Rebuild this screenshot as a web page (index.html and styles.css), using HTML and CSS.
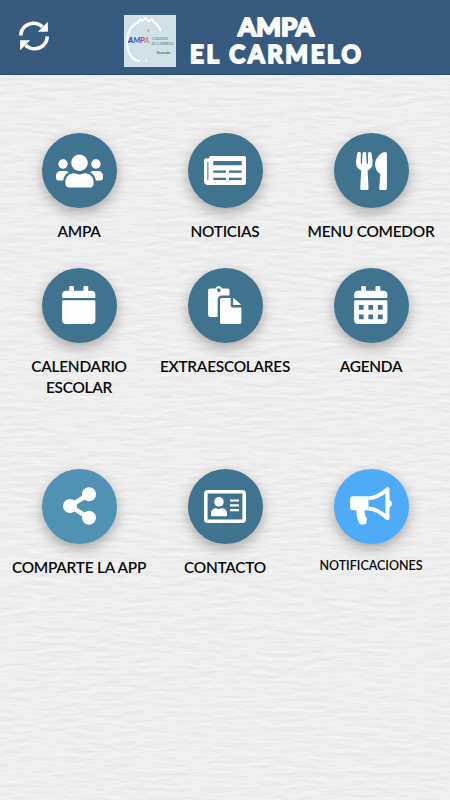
FILE: index.html
```html
<!DOCTYPE html>
<html lang="es">
<head>
  <meta charset="UTF-8">
  <meta name="viewport" content="width=device-width, initial-scale=1.0">
  <title>AMPA El Carmelo</title>
  <link rel="stylesheet" href="styles.css">
</head>
<body>
  <!-- Paper texture -->
  <svg class="paper" width="450" height="800">
    <filter id="grain" x="0" y="0" width="100%" height="100%" color-interpolation-filters="sRGB">
      <feTurbulence type="fractalNoise" baseFrequency="0.04 0.2" numOctaves="4" seed="8" result="noise"/>
      <feDiffuseLighting in="noise" surfaceScale="0.17" diffuseConstant="1.135" lighting-color="#eeeeee">
        <feDistantLight azimuth="270" elevation="62"/>
      </feDiffuseLighting>
    </filter>
    <rect width="450" height="800" filter="url(#grain)"/>
  </svg>

  <header class="topbar">
    <svg class="refresh" viewBox="0 0 30 30">
      <path d="M1.8 14.5C2 6.5 8.5 2.2 14.5 2.2c3.600 0 6.500 1.300 8.800 3.600" fill="none" stroke="#fff" stroke-width="3.600"/>
      <path d="M28.900.8v10h-10z" fill="#fff"/>
      <path d="M28.200 15.500c-.2 8-6.700 12.300-12.700 12.300-3.600 0-6.500-1.300-8.800-3.600" fill="none" stroke="#fff" stroke-width="3.600"/>
      <path d="M1.100 29.200v-10h10z" fill="#fff"/>
    </svg>

    <svg class="logo" viewBox="0 0 52 52">
      <rect width="52" height="52" fill="#d0e1e8"/>
      <path d="M15 46C6 44.500 2.500 34 3.200 24.500 4 15 9 9.500 14 7.500l2.200-3.200 2.600 1.500L21.500 3l2.700 3 4-1.800L30 7.500c3 1.500 5 4 6.200 7.500" fill="none" stroke="#fff" stroke-width="2" stroke-linecap="round" stroke-linejoin="round"/>
      <path d="M24.300 13.500l.6 1.300 1.400.2-1 1 .2 1.400-1.200-.7-1.200.7.200-1.400-1-1 1.400-.2z" fill="#c8b98c"/>
      <circle cx="22" cy="45.500" r="1" fill="#fff"/>
      <text class="logo-ampa" x="4" y="28" textLength="21.500" lengthAdjust="spacingAndGlyphs"><tspan fill="#4a2f9c">A</tspan><tspan fill="#3c62c8">M</tspan><tspan fill="#a53ccb">P</tspan><tspan fill="#d98d5a">A</tspan></text>
      <text class="logo-school" x="28" y="24.500" textLength="16" lengthAdjust="spacingAndGlyphs">COLEGIO</text>
      <text class="logo-school" x="27.500" y="30" textLength="22" lengthAdjust="spacingAndGlyphs">EL CARMELO</text>
      <text class="logo-city" x="32.500" y="38.500" textLength="13.500" lengthAdjust="spacingAndGlyphs">Granada</text>
    </svg>

    <h1>
      <svg class="title" viewBox="0 0 178 60">
        <text x="51" y="27.500" textLength="76" lengthAdjust="spacingAndGlyphs">AMPA</text>
        <text x="3" y="54.500" textLength="171" lengthAdjust="spacing">EL CARMELO</text>
      </svg>
    </h1>
  </header>

  <main class="menu">
    <a class="item">
      <span class="circle">
        <svg width="47" height="38" viewBox="0 0 640 512"><path d="M96 224c35.300 0 64-28.700 64-64s-28.700-64-64-64-64 28.700-64 64 28.700 64 64 64zm448 0c35.300 0 64-28.700 64-64s-28.700-64-64-64-64 28.700-64 64 28.700 64 64 64zm32 32h-64c-17.600 0-33.500 7.100-45.100 18.600 40.300 22.100 68.900 62 75.100 109.400h66c17.700 0 32-14.300 32-32v-32c0-35.300-28.700-64-64-64zm-256 0c61.900 0 112-50.100 112-112S381.900 32 320 32 208 82.100 208 144s50.100 112 112 112zm76.800 32h-8.300c-20.800 10-43.900 16-68.500 16s-47.600-6-68.500-16h-8.300C179.600 288 128 339.600 128 403.200V432c0 26.500 21.500 48 48 48h288c26.500 0 48-21.500 48-48v-28.800c0-63.600-51.600-115.200-115.200-115.200zm-223.700-13.400C161.500 263.100 145.600 256 128 256H64c-35.300 0-64 28.700-64 64v32c0 17.700 14.300 32 32 32h65.900c6.300-47.400 34.900-87.300 75.200-109.400z"/></svg>
      </span>
      <span class="label">AMPA</span>
    </a>
    <a class="item">
      <span class="circle">
        <svg width="42" height="29" viewBox="0 0 42 29">
          <path fill-rule="evenodd" d="M7 0h33a2 2 0 0 1 2 2v24.500a2.500 2.500 0 0 1-2.500 2.500H4a4 4 0 0 1-4-4V4a1.800 1.800 0 0 1 1.800-1.800H5V2a2 2 0 0 1 2-2zM9.300 5v4.200h28.400V5zM9.300 14.500v2.300H22v-2.300zM25 14.500v2.300h12.700v-2.300zM9.300 21.800V24H22v-2.200zM25 21.800V24h12.700v-2.200z"/>
          <path d="M3.800 6v18" stroke="#8f9da6" stroke-width="1.500"/>
        </svg>
      </span>
      <span class="label">NOTICIAS</span>
    </a>
    <a class="item">
      <span class="circle">
        <svg width="31" height="38" viewBox="0 0 416 512"><path d="M207.900 15.200c.8 4.700 16.100 94.500 16.100 128.800 0 52.300-27.800 89.600-68.900 104.600L168 486.700c.7 13.700-10.200 25.300-24 25.300H80c-13.700 0-24.700-11.500-24-25.300l12.900-238.100C27.700 233.600 0 196.200 0 144 0 109.600 15.300 19.900 16.100 15.200 19.300-5.100 61.400-5.400 64 16.300v141.200c1.300 3.400 15.100 3.200 16 0 1.400-25.300 7.900-139.200 8-141.800 3.300-20.800 44.700-20.800 47.900 0 .2 2.700 6.600 116.500 8 141.800.9 3.200 14.800 3.400 16 0V16.300c2.600-21.600 44.800-21.400 48-1.100zm119.200 285.700l-15 185.100c-1.200 14 9.900 26 23.900 26h56c13.300 0 24-10.700 24-24V24c0-13.200-10.700-24-24-24-82.500 0-221.400 178.500-64.900 300.900z"/></svg>
      </span>
      <span class="label">MENU COMEDOR</span>
    </a>
    <a class="item">
      <span class="circle">
        <svg width="33.500" height="38" viewBox="0 0 448 512"><path d="M12 192h424c6.600 0 12 5.400 12 12v260c0 26.500-21.500 48-48 48H48c-26.500 0-48-21.500-48-48V204c0-6.600 5.400-12 12-12zm436-44v-36c0-26.500-21.500-48-48-48h-48V12c0-6.600-5.400-12-12-12h-40c-6.600 0-12 5.400-12 12v52H160V12c0-6.600-5.400-12-12-12h-40c-6.600 0-12 5.400-12 12v52H48C21.500 64 0 85.500 0 112v36c0 6.600 5.400 12 12 12h424c6.600 0 12-5.400 12-12z"/></svg>
      </span>
      <span class="label">CALENDARIO<br>ESCOLAR</span>
    </a>
    <a class="item">
      <span class="circle">
        <svg width="33.500" height="38" viewBox="0 0 448 512">
          <path fill-rule="evenodd" d="M24 32h76C108 12 124 0 144 0s36 12 44 32h76c13 0 24 11 24 24v72H184c-31 0-56 25-56 56v232H24c-13 0-24-11-24-24V56c0-13 11-24 24-24zm120-2a25 25 0 1 0 0 50 25 25 0 0 0 0-50z"/>
          <path d="M184 160h120v104c0 13 11 24 24 24h120v200c0 13-11 24-24 24H184c-13 0-24-11-24-24V184c0-13 11-24 24-24zM336 160h8l104 96H336z"/>
        </svg>
      </span>
      <span class="label">EXTRAESCOLARES</span>
    </a>
    <a class="item">
      <span class="circle">
        <svg width="33.500" height="38" viewBox="0 0 448 512"><path fill-rule="evenodd" d="M12 192h424c6.600 0 12 5.400 12 12v260c0 26.500-21.500 48-48 48H48c-26.500 0-48-21.500-48-48V204c0-6.600 5.400-12 12-12zm436-44v-36c0-26.500-21.500-48-48-48h-48V12c0-6.600-5.400-12-12-12h-40c-6.600 0-12 5.400-12 12v52H160V12c0-6.600-5.400-12-12-12h-40c-6.600 0-12 5.400-12 12v52H48C21.500 64 0 85.500 0 112v36c0 6.600 5.400 12 12 12h424c6.600 0 12-5.400 12-12zM64 256h64v64H64zM192 256h64v64h-64zM320 256h64v64h-64zM64 384h64v64H64zM192 384h64v64h-64zM320 384h64v64h-64z"/></svg>
      </span>
      <span class="label">AGENDA</span>
    </a>
    <a class="item">
      <span class="circle share">
        <svg width="33" height="38" viewBox="0 0 33 38">
          <path d="M26 7L7 19l19 12" fill="none" stroke="#fff" stroke-width="4.500"/>
          <circle cx="7" cy="19" r="7"/>
          <circle cx="26" cy="7.200" r="7"/>
          <circle cx="26" cy="30.800" r="7"/>
        </svg>
      </span>
      <span class="label">COMPARTE LA APP</span>
    </a>
    <a class="item">
      <span class="circle">
        <svg width="42" height="33" viewBox="0 0 42 33">
          <rect x="1.800" y="1.800" width="38.400" height="29.400" rx="2" fill="none" stroke="#fff" stroke-width="3.600"/>
          <circle cx="15" cy="11.800" r="4.800"/>
          <path d="M7 25.500v-2c0-3 2-5.200 5-5.200 2 .8 4 .8 6 0 3 0 5 2.200 5 5.200v2q0 .8-.8.800H7.800q-.8 0-.8-.8z"/>
          <path d="M26 10.500h9M26 15.300h9M26 20.100h9" stroke="#fff" stroke-width="2.200"/>
        </svg>
      </span>
      <span class="label">CONTACTO</span>
    </a>
    <a class="item">
      <span class="circle notify">
        <svg width="42" height="38" viewBox="0 0 42 38">
          <path d="M3 9.300h15.500v14H3a3 3 0 0 1-3-3v-8a3 3 0 0 1 3-3z"/>
          <path d="M18.500 11.200C26 11 31.500 7.500 37.500 2.200v29C31.500 25.500 26 22 18.500 21.500" fill="none" stroke="#fff" stroke-width="4" stroke-linejoin="round"/>
          <path d="M6.500 22h8.300c-.5 4 .2 7 2.100 9.600.6 1-.2 1.900-.7 2.400.8 1.200.5 2.500-1 3-1.500.6-3.700.7-5.200.2C7.500 34 6 28 6.500 22z"/>
          <path d="M39 13.300c4 .5 4 6.500 0 7z"/>
        </svg>
      </span>
      <span class="label small">NOTIFICACIONES</span>
    </a>
  </main>
</body>
</html>
```
FILE: styles.css
```css
body {
  margin: 0;
  height: 800px;
  font-family: 'Lato', sans-serif;
  color: #0a0a0a;
  background: #eeeeee;
  overflow: hidden;
}

/* Paper background */
.paper {
  position: absolute;
  top: 0;
  left: 0;
  z-index: -1;
}

.topbar {
  display: flex;
  align-items: flex-start;
  box-sizing: border-box;
  height: 75px;
  background: #375a7f;
  border-bottom: 1px solid #234a6c;
}

.refresh {
  width: 30px;
  height: 30px;
  margin: 21px 0 0 19px;
}

.logo {
  width: 52px;
  height: 52px;
  margin: 15px 0 0 75px;
}

.logo-ampa {
  font-size: 7px;
  font-weight: 900;
  font-style: italic;
}

.logo-school {
  font-family: 'Liberation Serif', serif;
  font-size: 5px;
  font-style: italic;
  fill: #53616b;
}

.logo-city {
  font-size: 4.5px;
  fill: #33434d;
}

h1 {
  margin: 8px 0 0 11px;
  line-height: 0;
}

.title {
  width: 178px;
  height: 60px;
}

.title text {
  font-family: 'Lato', sans-serif;
  font-size: 24px;
  font-weight: 700;
  fill: #fafdff;
  stroke: #fafdff;
  stroke-width: 2px;
  stroke-linejoin: round;
}

.menu {
  display: grid;
  grid-template-columns: repeat(3, 146px);
  grid-template-rows: 134.5px 201px 130px;
  justify-content: center;
  padding-top: 58px;
}

.item {
  display: flex;
  flex-direction: column;
  align-items: center;
}

.circle {
  display: flex;
  align-items: center;
  justify-content: center;
  width: 75px;
  height: 75px;
  border-radius: 50%;
  background: #40738f;
  box-shadow: 0 5px 14px rgba(0, 0, 0, 0.3);
}

.circle svg {
  fill: #fff;
}

.share {
  background: #4f92b3;
}

.notify {
  background: #4dabf7;
}

.label {
  margin-top: 13px;
  font-size: 15.4px;
  font-weight: 600;
  line-height: 21px;
  letter-spacing: -0.25px;
  text-align: center;
  white-space: nowrap;
}

.small {
  margin-top: 11px;
  font-size: 12.5px;
  letter-spacing: 0;
}
```
